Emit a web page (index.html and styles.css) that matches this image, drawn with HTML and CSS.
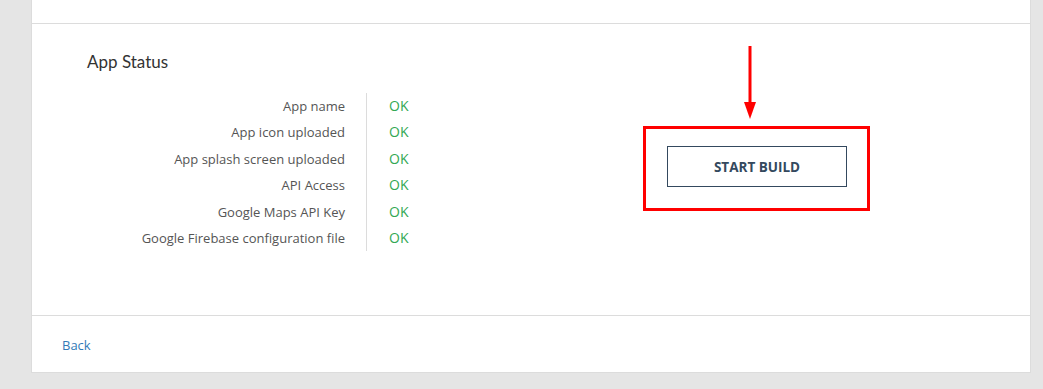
FILE: index.html
```html
<!DOCTYPE html>
<html lang="en">
  <head>
    <meta charset="UTF-8" />
    <title>App Build</title>
    <link rel="stylesheet" href="styles.css">
  </head>
  <body>
    <div class="card">
      <div class="card-top"></div>
      <div class="card-body">
        <div class="status">
          <h3 class="status-title">App Status</h3>
          <div class="status-list">
            <div class="status-label">App name</div>
            <div class="status-value">OK</div>
            <div class="status-label">App icon uploaded</div>
            <div class="status-value">OK</div>
            <div class="status-label">App splash screen uploaded</div>
            <div class="status-value">OK</div>
            <div class="status-label">API Access</div>
            <div class="status-value">OK</div>
            <div class="status-label">Google Maps API Key</div>
            <div class="status-value">OK</div>
            <div class="status-label">Google Firebase configuration file</div>
            <div class="status-value">OK</div>
          </div>
        </div>
        <div class="build">
          <div class="highlight">
            <!-- annotation arrow -->
            <svg class="arrow" width="14" height="74" viewBox="0 0 14 74">
              <line x1="7" y1="0" x2="7" y2="58" stroke="#ff0000" stroke-width="3" />
              <polygon points="1,56 13,56 7,73" fill="#ff0000" />
            </svg>
            <button type="button" class="btn-build">START BUILD</button>
          </div>
        </div>
      </div>
      <div class="card-footer">
        <a href="#" class="back-link">Back</a>
      </div>
    </div>
  </body>
</html>
```

FILE: styles.css
```css
body {
  margin: 0;
  background-color: #e5e5e5;
  font-family: "Open Sans", "Liberation Sans", sans-serif;
  font-size: 13px;
  color: #555;
}
.card {
  margin-left: 31px;
  width: 998px;
  background-color: white;
  border: 1px solid #dcdcdc;
  border-top: none;
}
.card-top {
  height: 23px;
  border-bottom: 1px solid #dcdcdc;
}
.card-body {
  display: flex;
  height: 291px;
  border-bottom: 1px solid #dcdcdc;
}
.status {
  width: 556px;
  padding-left: 55px;
}
.status-title {
  margin: 28px 0 0 0;
  font-family: "Lato", "Open Sans", sans-serif;
  font-weight: normal;
  font-size: 17px;
  line-height: 20px;
  color: #333;
}
.status-list {
  display: grid;
  grid-template-columns: 280px auto;
  margin-top: 21px;
}
.status-label {
  box-sizing: border-box;
  text-align: right;
  padding-right: 21px;
  border-right: 1px solid #dcdcdc;
  line-height: 26.4px;
}
.status-value {
  padding-left: 22px;
  line-height: 26.4px;
  color: #34a853;
  font-size: 14px;
}
.build {
  padding-top: 102px;
}
.highlight {
  position: relative;
  border: 3px solid #ff0000;
  padding: 17px 20px 21px 21px;
}
.arrow {
  position: absolute;
  left: 97px;
  top: -83px;
}
.btn-build {
  display: block;
  width: 180px;
  height: 41px;
  background-color: white;
  border: 1px solid #34495e;
  color: #34495e;
  font-family: "Open Sans", sans-serif;
  font-weight: bold;
  font-size: 13.5px;
  padding: 0;
}
.card-footer {
  height: 56px;
  padding-left: 30px;
  display: flex;
  align-items: center;
}
.back-link {
  color: #337ab7;
  text-decoration: none;
  margin-top: 2px;
}
```
